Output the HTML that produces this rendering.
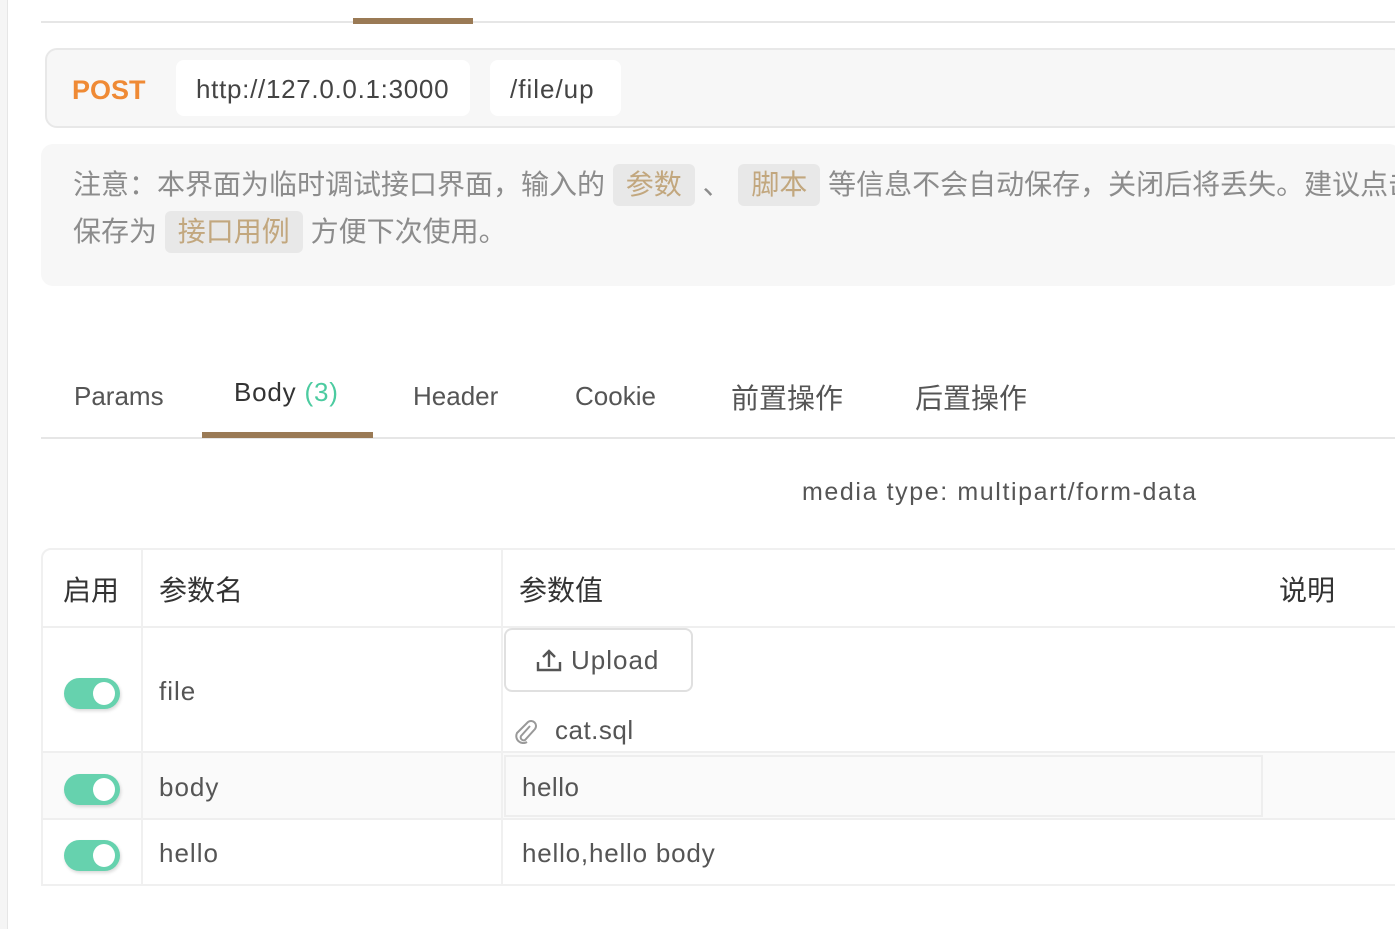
<!DOCTYPE html>
<html><head><meta charset="utf-8"><style>
*{margin:0;padding:0;box-sizing:border-box}
body{width:1395px;height:929px;overflow:hidden;background:#fff;font-family:"Liberation Sans","Noto Sans CJK SC",sans-serif;position:relative;color:#333}
.a{position:absolute;white-space:nowrap}
.tag{background:#e8e8e8;color:#c2a77e;border-radius:6px;padding:0 13px;display:inline-block;line-height:42px}
.sw{position:absolute;left:64px;width:56px;height:31px;border-radius:16px;background:#66d2ae;box-shadow:1px 2px 3px rgba(0,0,0,.15)}
.sw::after{content:"";position:absolute;right:5px;top:4px;width:22px;height:23px;border-radius:50%;background:#fff}
.vl{position:absolute;width:2px;background:#f0f0f0}
.hl{position:absolute;height:2px;background:#efefef}
</style></head><body>
<div class="a" style="left:0;top:0;width:8px;height:929px;background:#f5f5f5;border-right:1px solid #e6e6e6"></div>
<div class="a" style="left:41px;top:21px;width:1354px;height:2px;background:#e6e6e6"></div>
<div class="a" style="left:353px;top:18px;width:120px;height:6px;background:#9a7a55"></div>

<div class="a" style="left:45px;top:48px;width:1360px;height:80px;background:#f7f7f7;border:2px solid #e8e8e8;border-radius:12px"></div>
<div class="a" style="left:72px;top:72px;font-size:27px;font-weight:bold;color:#ef8a35;line-height:36px">POST</div>
<div class="a" style="left:176px;top:60px;width:294px;height:56px;background:#fff;border-radius:8px;font-size:26px;line-height:58px;padding-left:20px;color:#444;letter-spacing:0.7px">http://127.0.0.1:3000</div>
<div class="a" style="left:490px;top:60px;width:131px;height:56px;background:#fff;border-radius:8px;font-size:26px;line-height:58px;padding-left:20px;color:#444;letter-spacing:1px">/file/up</div>

<div class="a" style="left:41px;top:144px;width:1360px;height:142px;background:#f7f7f7;border-radius:12px"></div>
<div class="a" style="left:73px;top:164px;font-size:28px;line-height:42px;color:#8c8c8c">注意：本界面为临时调试接口界面，输入的 <span class="tag">参数</span> 、 <span class="tag">脚本</span> 等信息不会自动保存，关闭后将丢失。建议点击</div>
<div class="a" style="left:73px;top:211px;font-size:28px;line-height:42px;color:#8c8c8c">保存为 <span class="tag">接口用例</span> 方便下次使用。</div>

<div class="a" style="left:74px;top:381px;font-size:26px;color:#555">Params</div>
<div class="a" style="left:234px;top:377px;font-size:26px;color:#333;letter-spacing:0.8px">Body <span style="color:#4ccba0">(3)</span></div>
<div class="a" style="left:413px;top:381px;font-size:26px;color:#555">Header</div>
<div class="a" style="left:575px;top:381px;font-size:26px;color:#555">Cookie</div>
<div class="a" style="left:731px;top:377px;font-size:28px;color:#555">前置操作</div>
<div class="a" style="left:915px;top:377px;font-size:28px;color:#555">后置操作</div>
<div class="a" style="left:41px;top:437px;width:1354px;height:2px;background:#e6e6e6"></div>
<div class="a" style="left:202px;top:432px;width:171px;height:6px;background:#9a7a55"></div>

<div class="a" style="left:802px;top:478px;font-size:25px;color:#555;letter-spacing:1.6px">media type: multipart/form-data</div>

<div class="a" style="left:41px;top:548px;width:1360px;height:338px;border:2px solid #f0f0f0;border-radius:10px 0 0 0"></div>
<div class="a" style="left:43px;top:753px;width:1352px;height:65px;background:#fafafa"></div>
<div class="hl" style="left:41px;top:626px;width:1354px"></div>
<div class="hl" style="left:41px;top:751px;width:1354px"></div>
<div class="hl" style="left:41px;top:818px;width:1354px"></div>
<div class="vl" style="left:141px;top:550px;height:334px"></div>
<div class="vl" style="left:501px;top:550px;height:334px"></div>

<div class="a" style="left:63px;top:569px;font-size:28px;color:#333">启用</div>
<div class="a" style="left:159px;top:569px;font-size:28px;color:#333">参数名</div>
<div class="a" style="left:519px;top:569px;font-size:28px;color:#333">参数值</div>
<div class="a" style="left:1279px;top:569px;font-size:28px;color:#333">说明</div>

<div class="sw" style="top:678px"></div>
<div class="sw" style="top:774px"></div>
<div class="sw" style="top:840px"></div>

<div class="a" style="left:159px;top:676px;font-size:26px;color:#555;letter-spacing:1px">file</div>
<div class="a" style="left:159px;top:772px;font-size:26px;color:#555;letter-spacing:1px">body</div>
<div class="a" style="left:159px;top:838px;font-size:26px;color:#555;letter-spacing:1px">hello</div>

<div class="a" style="left:504px;top:628px;width:189px;height:64px;border:2px solid #e0e0e0;border-radius:8px;background:#fff"></div>
<svg class="a" style="left:536px;top:648px" width="26" height="26" viewBox="0 0 26 26"><path d="M2 14v8h22v-8" fill="none" stroke="#555" stroke-width="2.4"/><path d="M13 19V3M7 9l6-6 6 6" fill="none" stroke="#555" stroke-width="2.4"/></svg>
<div class="a" style="left:571px;top:645px;font-size:26px;color:#555;letter-spacing:1px">Upload</div>
<svg class="a" style="left:513px;top:718px" width="24" height="26" viewBox="0 0 24 26"><path d="M17 8l-9 10a3 3 0 0 0 4 4l10-11a5 5 0 0 0-7-7L4 15a7 7 0 0 0 10 9" fill="none" stroke="#999" stroke-width="2"/></svg>
<div class="a" style="left:555px;top:715px;font-size:26px;color:#555;letter-spacing:0.5px">cat.sql</div>

<div class="a" style="left:504px;top:755px;width:759px;height:62px;border:2px solid #eee;background:#fafafa"></div>
<div class="a" style="left:522px;top:772px;font-size:26px;color:#555;letter-spacing:0.5px">hello</div>
<div class="a" style="left:522px;top:838px;font-size:26px;color:#555;letter-spacing:0.8px">hello,hello body</div>
</body></html>
